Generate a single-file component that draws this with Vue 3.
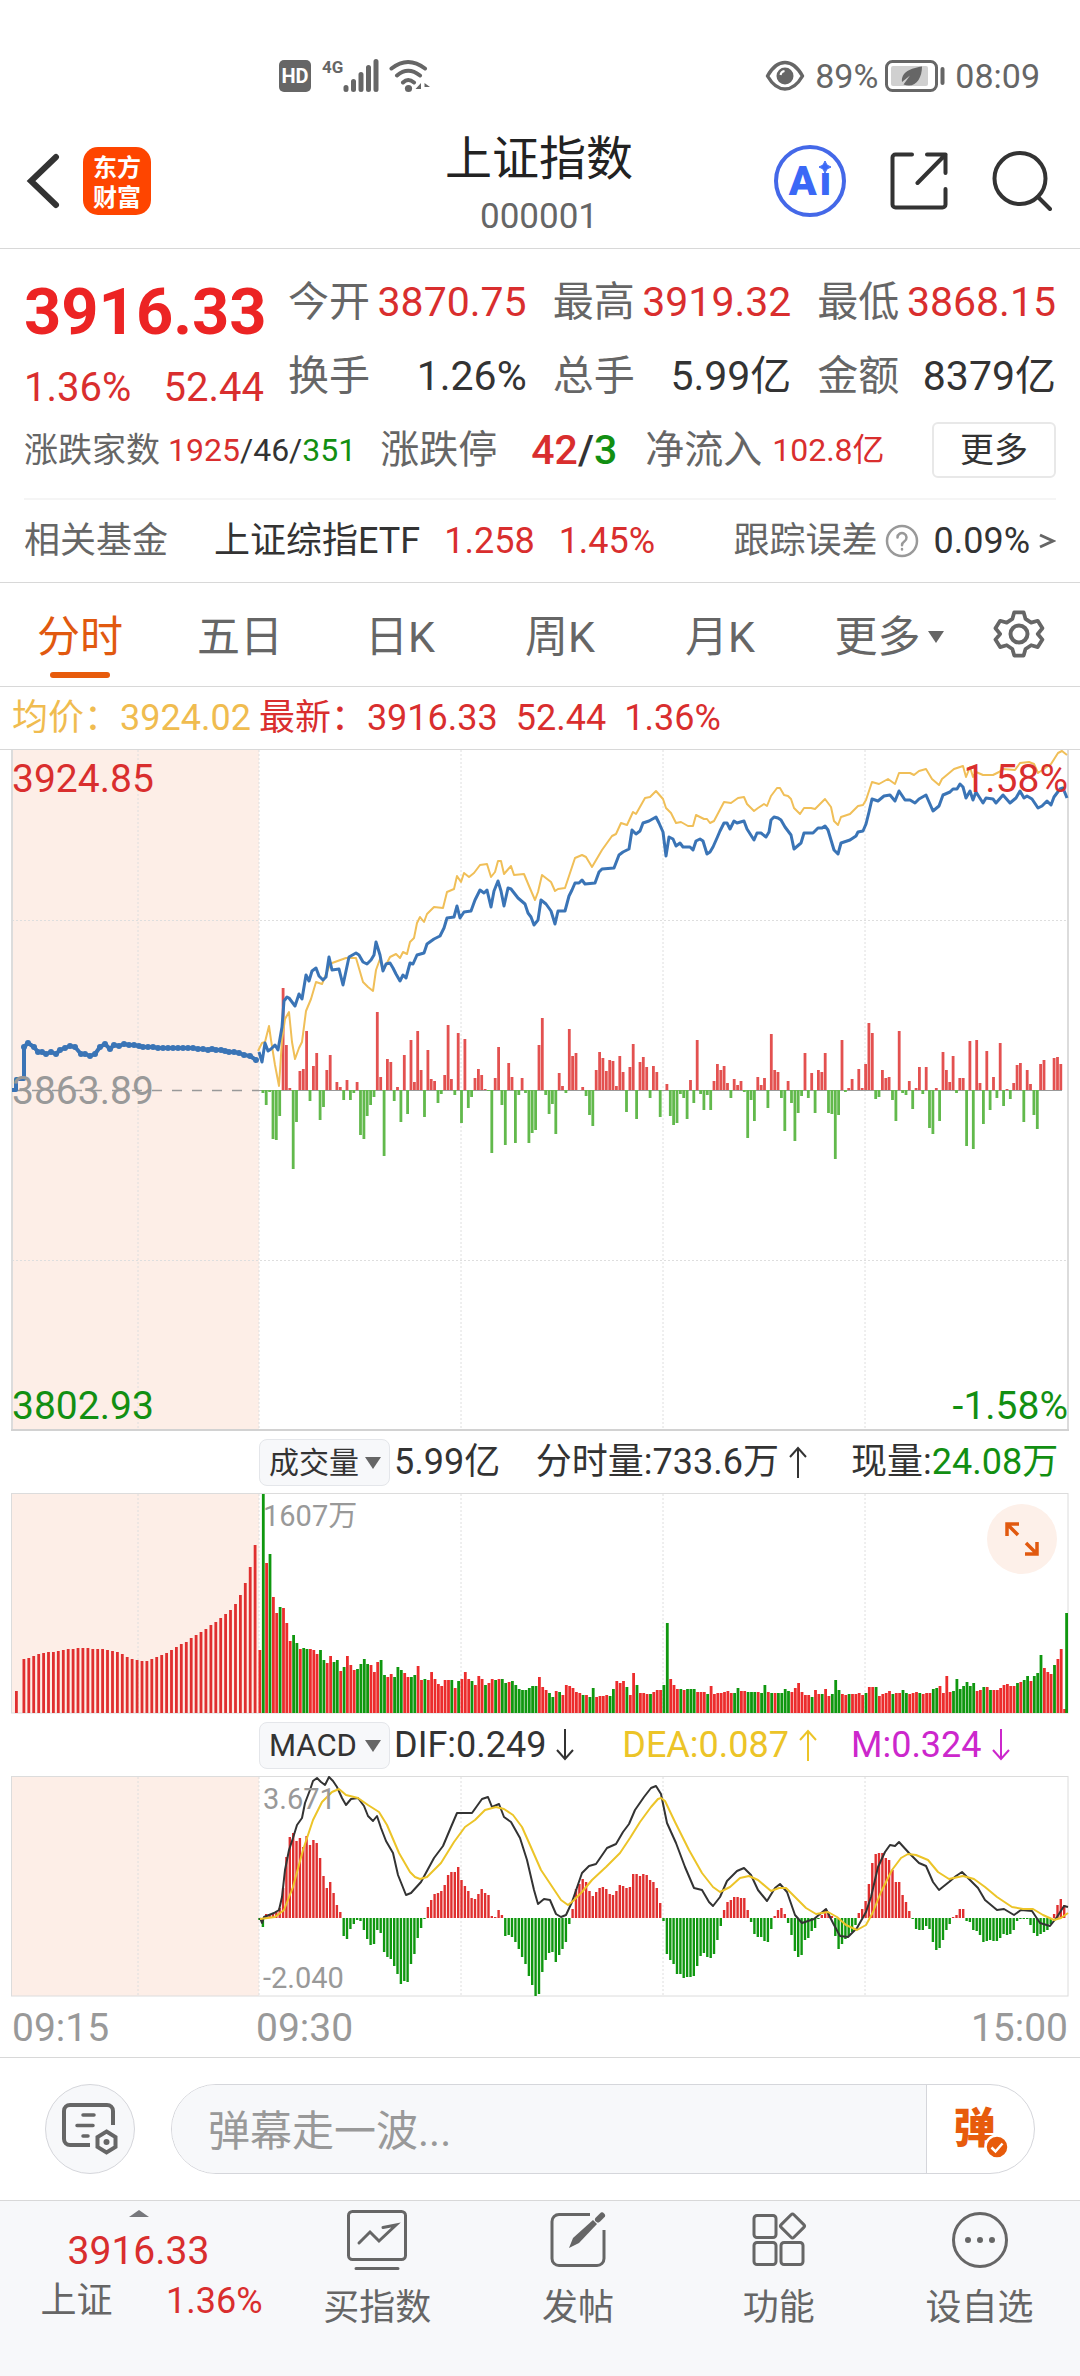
<template>
  <div class="page">

    <!-- Status bar -->
    <div class="status-bar">
      <div class="status-left">
        <span class="hd-badge">HD</span>
        <span class="net-type">4G</span>
        <svg class="signal" width="36" height="34" viewBox="0 0 36 34" fill="none" stroke="currentColor" stroke-width="5" stroke-linecap="round">
          <path d="M3 30.5v-2M10.500 30.500v-8M18 30.500v-15M25.500 30.500v-22M33 30.500v-28"/>
        </svg>
        <svg width="42" height="34" viewBox="0 0 42 34" fill="none" stroke="currentColor" stroke-width="4" stroke-linecap="round">
          <path d="M2.500 9.500Q19 -3.500 36 9.500M8 16.500Q19 7 31 16.500M14 23.500Q19 18.500 25 23.500"/>
          <circle cx="19.500" cy="29.500" r="3.600" fill="currentColor" stroke="none"/>
          <path d="M32 33V24L26.500 30H32M35.500 33V24L41 28H35.500" fill="currentColor" stroke="none"/>
        </svg>
      </div>
      <div class="status-right">
        <svg width="40" height="32" viewBox="0 0 40 32" fill="none" stroke="currentColor" stroke-width="3.500">
          <path d="M2.500 16Q10 2.500 20 2.500T37.500 16Q30 29 20 29T2.500 16z" stroke-linejoin="round"/>
          <circle cx="20" cy="16" r="8.500" fill="currentColor" stroke="none"/>
          <path d="M15.500 15q.5-3.500 4-4" stroke="#fff" stroke-width="2"/>
        </svg>
        <span class="battery-text">89%</span>
        <svg width="62" height="32" viewBox="0 0 62 32" fill="none">
          <rect x="1.500" y="1.500" width="50" height="29" rx="6" stroke="currentColor" stroke-width="3"/>
          <rect x="6" y="6" width="37" height="20" rx="2" fill="#d0d0d0"/>
          <path d="M37 6.500C26 8 16 12 17 22L25 15.500 18.500 24.500C30 29 37 19 37 6.500z" fill="currentColor"/>
          <path d="M57.500 9v14" stroke="currentColor" stroke-width="4" stroke-linecap="round"/>
        </svg>
        <span class="clock">08:09</span>
      </div>
    </div>

    <!-- Header -->
    <header class="header">
      <div class="header-side">
        <button class="icon-btn" aria-label="返回">
          <svg width="34" height="58" viewBox="0 0 34 58" fill="none" stroke="#333" stroke-width="6" stroke-linecap="round">
            <path d="M30 5L5 29l25 24"/>
          </svg>
        </button>
        <a class="brand" href="#"><span>东方</span><span>财富</span></a>
      </div>
      <div class="header-title">
        <h1>上证指数</h1>
        <p>000001</p>
      </div>
      <div class="header-side header-actions">
        <button class="icon-btn ai-btn" aria-label="智能助手">
          <span>A</span><span>ı</span>
          <svg class="ai-star" width="12" height="12" viewBox="0 0 12 12"><path d="M6 0Q7 5 12 6 7 7 6 12 5 7 0 6 5 5 6 0z" fill="#3b68f6" stroke="#3b68f6"/></svg>
        </button>
        <button class="icon-btn" aria-label="分享">
          <svg width="58" height="58" viewBox="0 0 58 58" fill="none" stroke="#333" stroke-width="4" stroke-linecap="round" stroke-linejoin="round">
            <path d="M22 2.500H5.500a3 3 0 0 0-3 3v47a3 3 0 0 0 3 3h47a3 3 0 0 0 3-3V37M37 2.500h18.500V21M55.500 2.500L27.500 31"/>
          </svg>
        </button>
        <button class="icon-btn" aria-label="搜索">
          <svg width="60" height="60" viewBox="0 0 60 60" fill="none" stroke="#333" stroke-width="4" stroke-linecap="round">
            <circle cx="28" cy="27.500" r="25.500"/>
            <path d="M46 46l12 12"/>
          </svg>
        </button>
      </div>
    </header>

    <!-- Quote summary -->
    <section class="quote">
      <div class="quote-main">
        <div class="last">
          <strong>3916.33</strong>
          <div class="last-change"><span>1.36%</span><span>52.44</span></div>
        </div>
        <dl class="quote-grid">
          <div v-for="item in quotes" :key="item.label" class="quote-cell">
            <dt>{{ item.label }}</dt>
            <dd :class="{ up: item.up }">{{ item.value }}</dd>
          </div>
        </dl>
      </div>
      <div class="breadth">
        <span class="breadth-label small">涨跌家数</span>
        <span class="breadth-count"><i class="up">1925</i>/46/<i class="down">351</i></span>
        <span class="breadth-label limit-label">涨跌停</span>
        <span class="limit-count"><i class="up">42</i>/<i class="down">3</i></span>
        <span class="breadth-label flow-label">净流入</span>
        <span class="flow up">102.8亿</span>
        <button class="more-btn">更多</button>
      </div>
      <div class="fund">
        <span class="muted">相关基金</span>
        <a class="fund-name" href="#">上证综指ETF</a>
        <span class="fund-price up">1.258</span>
        <span class="up">1.45%</span>
        <span class="track muted">跟踪误差</span>
        <svg class="help" width="34" height="34" viewBox="0 0 34 34" fill="none" stroke="#999" stroke-width="2.500" stroke-linecap="round">
          <circle cx="17" cy="17" r="15"/>
          <path d="M12.500 13.500a4.500 4.500 0 1 1 7 3.800c-1.800 1.200-2.500 2-2.500 4M17 25v.5"/>
        </svg>
        <span>0.09%</span>
        <svg class="chev" width="18" height="22" viewBox="0 0 18 22" fill="none" stroke="#666" stroke-width="3"><path d="M2 5l13 6-13 6"/></svg>
      </div>
    </section>

    <!-- Period tabs -->
    <nav class="tabs">
      <button
        v-for="tab in tabs"
        :key="tab"
        class="tab"
        :class="{ active: tab === activeTab, 'has-menu': tab === '更多' }"
        @click="activeTab = tab"
      >
        {{ tab }}<span v-if="tab === '更多'" class="tri"></span>
      </button>
      <button class="gear" aria-label="设置">
        <svg width="52" height="52" viewBox="0 0 52 52" fill="none" stroke="#666" stroke-width="4" stroke-linejoin="round">
          <path d="M21 3h10l2 7 6 4 7-2 5 8-5 6 5 6-5 8-7-2-6 4-2 7H21l-2-7-6-4-7 2-5-8 5-6-5-6 5-8 7 2 6-4z" transform="translate(1.500 .5) scale(.94)"/>
          <circle cx="26" cy="25" r="8.500"/>
        </svg>
      </button>
    </nav>

    <div class="price-line">
      <span class="avg">均价：3924.02</span>
      <span class="up">最新：3916.33</span>
      <span class="up gap-left">52.44</span>
      <span class="up gap-left">1.36%</span>
    </div>

    <!-- Intraday chart -->
    <div class="chart">
      <svg viewBox="11 750 1058 681">
        <rect x="12" y="750" width="247" height="680" fill="#fdeee7"/>
        <g stroke="#dedede" stroke-width="1" stroke-dasharray="2 2">
          <path v-for="x in gridX" :key="x" :d="`M${x} 750V1430`"/>
          <path d="M12 920.500H1068M12 1260.500H1068"/>
        </g>
        <path d="M12 750V1430M1068 750V1430" stroke="#dcdcdc" stroke-width="2"/>
        <path d="M11 1430H1069" stroke="#d2d2d2" stroke-width="2"/>
        <path d="M12 1090.500H259" stroke="#999" stroke-width="1.500" stroke-dasharray="10 10"/>
        <path d="M259 1090.500H1062" stroke="#999" stroke-width="1"/>
        <path :d="momentum.up" fill="#e35150"/>
        <path :d="momentum.down" fill="#62b94c"/>
        <polyline :points="avgLine" fill="none" stroke="#f0bf58" stroke-width="2" stroke-linejoin="round"/>
        <polyline :points="auctionLine" fill="none" stroke="#3a74b6" stroke-width="4" stroke-linejoin="round"/>
        <circle v-for="(dot, i) in auctionDots" :key="i" :cx="dot[0]" :cy="dot[1]" r="3" fill="#3a74b6"/>
        <polyline :points="priceLine" fill="none" stroke="#3a74b6" stroke-width="3" stroke-linejoin="round"/>
      </svg>
      <span class="axis top-left up">3924.85</span>
      <span class="axis top-right up">1.58%</span>
      <span class="axis mid-left">3863.89</span>
      <span class="axis bottom-left down">3802.93</span>
      <span class="axis bottom-right down">-1.58%</span>
    </div>

    <!-- Volume -->
    <div class="indicator">
      <label class="picker">
        <select aria-label="成交量指标"><option>成交量</option></select>
        <span class="tri"></span>
      </label>
      <div class="indicator-pair">
        <span>5.99亿</span>
        <span class="with-arrow">分时量:733.6万<svg width="20" height="34" viewBox="0 0 20 34" class="arrow"><path d="M10 33V3M2 12l8-9 8 9"/></svg></span>
      </div>
      <span class="indicator-last">现量:<i class="down">24.08万</i></span>
    </div>
    <div class="chart">
      <svg viewBox="11 1493 1058 221">
        <rect x="12" y="1494" width="247" height="219" fill="#fdeee7"/>
        <g stroke="#dedede" stroke-width="1" stroke-dasharray="2 2">
          <path v-for="x in gridX" :key="x" :d="`M${x} 1494V1713`"/>
        </g>
        <rect x="11.500" y="1493.500" width="1056.500" height="219.500" fill="none" stroke="#dcdcdc"/>
        <path :d="auctionVolume" fill="#e02f2f"/>
        <path :d="volume.up" fill="#ec2c2c"/>
        <path :d="volume.down" fill="#0f970f"/>
      </svg>
      <span class="axis-small vol-max">1607万</span>
      <button class="expand" aria-label="放大">
        <svg width="36" height="36" viewBox="0 0 36 36" fill="none" stroke="#e1590f" stroke-width="3.500">
          <path d="M3 15V3h12M3.500 3.500L14 14M33 21v12H21M32.500 32.500L22 22"/>
        </svg>
      </button>
    </div>

    <!-- MACD -->
    <div class="indicator">
      <label class="picker macd">
        <select aria-label="MACD指标"><option>MACD</option></select>
        <span class="tri"></span>
      </label>
      <div class="indicator-pair wide">
        <span class="with-arrow">DIF:0.249<svg width="20" height="34" viewBox="0 0 20 34" class="arrow"><path d="M10 1v30M2 22l8 9 8-9"/></svg></span>
        <span class="with-arrow dea">DEA:0.087<svg width="20" height="34" viewBox="0 0 20 34" class="arrow"><path d="M10 33V3M2 12l8-9 8 9"/></svg></span>
      </div>
      <span class="indicator-last with-arrow macd-m">M:0.324<svg width="20" height="34" viewBox="0 0 20 34" class="arrow"><path d="M10 1v30M2 22l8 9 8-9"/></svg></span>
    </div>
    <div class="chart">
      <svg viewBox="11 1776 1058 221">
        <rect x="12" y="1777" width="247" height="219" fill="#fdeee7"/>
        <g stroke="#dedede" stroke-width="1" stroke-dasharray="2 2">
          <path v-for="x in gridX" :key="x" :d="`M${x} 1777V1996`"/>
        </g>
        <rect x="11.500" y="1776.500" width="1056.500" height="219.500" fill="none" stroke="#dcdcdc"/>
        <path :d="macd.up" fill="#e02f2f"/>
        <path :d="macd.down" fill="#0f970f"/>
        <polyline :points="difLine" fill="none" stroke="#333" stroke-width="2" stroke-linejoin="round"/>
        <polyline :points="deaLine" fill="none" stroke="#ecc428" stroke-width="2" stroke-linejoin="round"/>
      </svg>
      <span class="axis-small macd-max">3.671</span>
      <span class="axis-small macd-min">-2.040</span>
    </div>

    <div class="times">
      <span class="time-first">09:15</span>
      <span>09:30</span>
      <span class="time-last">15:00</span>
    </div>

    <!-- Danmu input -->
    <div class="danmu">
      <button class="danmu-setting" aria-label="弹幕设置">
        <svg width="56" height="52" viewBox="0 0 56 52" fill="none" stroke="#666" stroke-width="4" stroke-linecap="round">
          <path d="M51 22V8a6 6 0 0 0-6-6H8a6 6 0 0 0-6 6v28a6 6 0 0 0 6 6h20" stroke-linecap="butt"/>
          <path d="M21 12h11M15 22.500h16M21 33h5" stroke-width="3.500"/>
          <path d="M44.500 28.500l9 5.500v10l-9 5.500-9-5.500V34z"/>
          <circle cx="44.500" cy="39" r="3" fill="#666" stroke="none"/>
        </svg>
      </button>
      <div class="danmu-box">
        <input type="text" placeholder="弹幕走一波..." aria-label="弹幕" />
        <button class="danmu-toggle" aria-label="弹幕开关">
          <span>弹</span>
          <svg class="danmu-check" width="26" height="26" viewBox="0 0 26 26">
            <circle cx="13" cy="13" r="11.500" fill="#e75b0c" stroke="#fff" stroke-width="2.500"/>
            <path d="M7.500 13.500l4 4 7-8" fill="none" stroke="#fff" stroke-width="2.500"/>
          </svg>
        </button>
      </div>
    </div>

    <!-- Bottom bar -->
    <footer class="bottom">
      <button class="bottom-index">
        <span class="caret"></span>
        <span class="bottom-price up">3916.33</span>
        <span class="bottom-row"><span>上证</span><span class="up">1.36%</span></span>
      </button>
      <button class="bottom-item">
        <svg width="62" height="62" viewBox="0 0 62 62" fill="none" stroke="#666" stroke-width="3" stroke-linecap="round">
          <rect x="2.500" y="2.500" width="57" height="48" rx="4"/>
          <path d="M13 34l11-11 9 9 17-16-13 2.500M10 59.500h42"/>
        </svg>
        买指数
      </button>
      <button class="bottom-item">
        <svg width="62" height="62" viewBox="0 0 62 62" fill="none" stroke="#666" stroke-width="3">
          <path d="M43 5.500H12a7 7 0 0 0-7 7v37a7 7 0 0 0 7 7h38a7 7 0 0 0 7-7V21"/>
          <path d="M22 39l4-10 20-18 4 4-18 19z" fill="#666" stroke="none"/>
          <path d="M51 10.500l4-4" stroke-width="6" stroke-linecap="round"/>
        </svg>
        发帖
      </button>
      <button class="bottom-item">
        <svg width="62" height="62" viewBox="0 0 62 62" fill="none" stroke="#666" stroke-width="3" stroke-linejoin="round">
          <rect x="6" y="6.500" width="22" height="22" rx="3"/>
          <rect x="6" y="33.500" width="22" height="22" rx="3"/>
          <rect x="33" y="33.500" width="22" height="22" rx="3"/>
          <rect x="35.500" y="8" width="18" height="18" rx="2" transform="rotate(45 44.500 17)"/>
        </svg>
        功能
      </button>
      <button class="bottom-item">
        <svg width="62" height="62" viewBox="0 0 62 62" fill="none" stroke="#666" stroke-width="3">
          <circle cx="31" cy="31" r="26.500"/>
          <g fill="#666" stroke="none"><circle cx="19" cy="31" r="3"/><circle cx="31" cy="31" r="3"/><circle cx="43" cy="31" r="3"/></g>
        </svg>
        设自选
      </button>
    </footer>
  </div>
</template>

<script setup>
import { ref } from 'vue'

const quotes = [
  { label: '今开', value: '3870.75', up: true },
  { label: '最高', value: '3919.32', up: true },
  { label: '最低', value: '3868.15', up: true },
  { label: '换手', value: '1.26%' },
  { label: '总手', value: '5.99亿' },
  { label: '金额', value: '8379亿' }
]

const tabs = ['分时', '五日', '日K', '周K', '月K', '更多']
const activeTab = ref('分时')

const gridX = [138, 259, 461, 663, 865]
const OPEN_X = 259.5
const STEP = 3.367

// one bar per minute, starting at 09:30
const momentumData = [
  0, -3, -15, -2, -49, -50, -26, 102, 45, 2, -79, -32, 19, 21, 59, -11, 24, 37, -30, -17,
  20, 35, 0, 8, 3, -10, 10, -10, -3, 8, -45, -49, -26, -15, -7, 78, 13, -66, 31, 28,
  -11, 3, -32, 35, -24, 50, 8, 59, 20, -27, 40, 11, 9, -13, -4, 15, 65, 11, -5, 57,
  -33, 51, -18, -7, 12, 21, 15, 1, -1, -63, 12, 43, -15, -55, 27, 13, -53, -5, 12, -3,
  -53, -43, -40, 45, 72, -5, -24, -14, -44, 17, 4, -3, 61, 34, 37, 0, 3, -6, -25, -36,
  20, 38, 32, 19, 30, 29, 4, 34, 18, -22, 23, 46, -29, 28, 33, 23, -8, 24, 18, -27,
  0, 6, -26, -35, -33, -4, -8, -29, 10, -13, 50, -4, -20, -5, -20, 9, 26, 20, 24, 7,
  -8, 11, 5, 9, -2, -48, -10, -31, 13, 5, 12, -18, 56, 20, 18, -8, -41, 9, -13, -51,
  -23, -6, 37, -8, 17, -23, 20, 18, 37, -23, -24, -69, -25, 50, -2, 2, 11, 0, 21, 2,
  26, 67, 57, -9, -7, 20, 12, 13, -10, -31, 59, -3, -5, 9, -19, 2, 23, -4, 23, -38,
  -44, 2, -31, 38, 20, 8, 34, -3, 12, 12, -56, 49, -59, 50, 7, -34, 39, -20, 13, -8,
  47, -16, 1, -9, 7, 25, 27, -32, 20, 6, -25, -39, 26, 30, 0, 0, 32, 33, 26
]

// negative marks a falling minute
const volumeData = [
  63, -219, 150, -159, 116, 100, -106, 105, 90, 72, -78, -70, 64, -65, -64, 64, 63, 59, -63, -53,
  50, 57, -51, -53, 42, -46, 57, 48, 43, -44, -49, -54, -49, 48, 41, 51, -53, -38, 36, 39,
  -36, -46, -43, 40, 36, -36, -38, 47, 33, -34, 33, 41, 34, 29, 27, 33, 33, -33, 25, -32,
  34, 41, 34, -32, 28, 37, 34, -28, 30, 34, -33, 34, -34, -30, 31, -32, -28, -24, -23, -23,
  -25, -27, -27, 36, 26, 23, -20, -16, 22, -21, 18, 28, 27, 25, 21, 20, -18, 18, -16, -25,
  16, 17, 17, 18, -17, -24, 32, 30, 32, -26, 18, 40, -28, 20, 20, 19, -19, 21, 23, 23,
  -28, -90, 34, 28, 24, -24, 23, -24, -24, -24, 21, 21, 21, -19, 27, 19, 20, 20, 21, 22,
  20, -20, -25, 22, 22, -21, -21, -21, 21, -20, -28, 21, -20, 20, -20, -20, -24, -22, 21, 25,
  30, 21, 18, 18, -16, 23, 19, -19, 24, 17, -19, -33, -23, 19, 18, -19, 19, 19, 20, 18,
  -20, 26, 26, -26, 17, 19, 20, 22, -19, 20, 20, -23, -20, 19, 20, 21, -20, 19, 20, 20,
  -24, -25, 27, 20, 37, 21, -22, -34, -24, -27, -31, -27, -30, 22, 23, -26, 26, -23, 23, 23,
  25, 28, 29, 27, 27, -30, 31, -33, -37, 32, -37, -40, -58, 45, 41, 39, -48, 54, 64, 4,
  -100
]

const auctionVolumeData = [
  54, 55, 57, 59, 60, 61, 61, 62, 63, 64, 64, 65, 65, 65, 64, 64, 64, 63, 62, 61,
  59, 56, 54, 53, 52, 52, 54, 56, 58, 60, 63, 66, 69, 71, 75, 78, 81, 84, 88, 91,
  95, 99, 103, 109, 118, 130, 146, 168
]

const macdData = [
  -2, -9, 4, 4, 5, 7, 10, 30, 61, 81, 85, 77, 80, 71, 82, 73, 78, 75, 60, 42,
  30, 36, 25, 13, 6, -18, -21, -11, -6, -2, -3, -12, -21, -27, -26, -12, -15, -34, -39, -41,
  -48, -56, -66, -63, -64, -46, -36, -20, -10, -1, 11, 18, 24, 25, 27, 33, 43, 46, 46, 51,
  38, 32, 27, 20, 19, 24, 29, 25, 23, 2, 1, 8, 3, -18, -17, -19, -24, -31, -39, -46,
  -58, -67, -78, -76, -54, -42, -35, -34, -44, -37, -31, -24, -6, 9, 29, 34, 39, 36, 27, 22,
  26, 30, 31, 29, 24, 23, 27, 33, 32, 30, 31, 44, 44, 42, 44, 43, 38, 36, 30, 15,
  -3, -36, -42, -46, -56, -56, -60, -59, -59, -58, -48, -38, -35, -39, -40, -36, -22, -8, 8, 16,
  18, 21, 21, 20, 20, 8, -4, -16, -19, -19, -23, -24, -11, 2, 8, 10, 4, -5, -17, -33,
  -39, -37, -22, -20, -13, -10, -1, 3, 9, 5, 2, -18, -31, -26, -21, -18, -14, -7, 5, 9,
  17, 34, 55, 64, 65, 65, 60, 58, 48, 36, 36, 23, 16, 7, -1, -11, -12, -12, -8, -11,
  -24, -32, -30, -22, -12, -6, 1, 3, 9, 9, -3, -4, -12, -13, -17, -24, -23, -22, -23, -23,
  -20, -16, -17, -16, -12, -3, -1, -1, -1, -7, -15, -18, -16, -14, -12, -6, 4, 13, 19, 13
]

const bar = (x, y, w, h) => `M${x.toFixed(1)} ${y}h${w}v${h}h-${w}z`

// bars on both sides of a zero line
function signedBars(data, zero, width) {
  const out = { up: '', down: '' }
  data.forEach((v, i) => {
    const x = OPEN_X + i * STEP - width / 2
    if (v > 0) out.up += bar(x, zero - v, width, v)
    if (v < 0) out.down += bar(x, zero, width, -v)
  })
  return out
}

// bars that all stand on the base line, the sign only picks the colour
function standingBars(data, base, width) {
  const out = { up: '', down: '' }
  data.forEach((v, i) => {
    const h = Math.abs(v)
    const x = Math.min(OPEN_X + i * STEP - 1, 1068 - width)
    out[v < 0 ? 'down' : 'up'] += bar(x, base - h, width, h)
  })
  return out
}

const momentum = signedBars(momentumData, 1090, 2.8)
const volume = standingBars(volumeData, 1713, 2.8)
const macd = signedBars(macdData, 1918, 2.4)
const auctionVolume = bar(15, 1691, 2.8, 22) +
  auctionVolumeData.map((h, i) => bar(22.5 + i * 4.92, 1713 - h, 2.8, h)).join('')

const auctionLine = '12,1090 16,1090 16,1079 24,1079 24,1047 28,1043 34,1047 38,1052 42,1052 46,1054 51,1052 56,1054 60,1050 65,1048 70,1046 75,1047 81,1054 85,1054 90,1056 95,1054 100,1047 105,1044 110,1049 114,1045 119,1046 124,1044 129,1045 134,1045 139,1046 143,1047 148,1047 153,1047 158,1048 163,1048 168,1048 173,1048 178,1048 183,1048 188,1048 193,1048 198,1049 203,1049 208,1050 212,1049 216,1050 221,1050 225,1051 229,1052 234,1052 239,1053 244,1055 250,1056 256,1060'
const auctionDots = auctionLine.split(' ').slice(4).map(p => p.split(','))

const priceLine = '259,1052 262,1062 265,1043 268,1051 271,1049 275,1045 278,1050 282,1027 284,1001 287,997 289,998 295,1006 299,994 302,999 306,975 309,981 312,971 316,968 319,976 323,980 326,977 329,957 332,970 339,969 343,985 349,957 356,953 359,955 363,962 367,964 371,960 374,955 376,942 380,955 383,971 386,964 390,963 393,968 396,974 400,981 403,975 406,978 410,963 413,964 417,955 424,953 427,944 434,939 440,936 444,928 447,918 454,917 457,906 460,918 464,912 471,911 475,900 480,890 484,893 487,890 491,907 494,891 498,881 501,891 504,906 508,888 511,889 518,898 525,904 528,913 531,917 534,925 538,920 541,900 546,904 551,911 555,924 558,911 565,911 569,896 572,890 575,883 579,883 582,880 585,884 595,883 599,872 602,869 614,868 619,855 623,852 629,849 632,830 636,834 640,831 643,823 649,821 656,817 659,823 663,832 666,856 669,837 673,839 676,846 680,843 683,847 690,847 693,850 696,841 700,839 703,841 707,854 710,852 713,847 717,838 720,831 724,823 727,823 730,829 734,821 737,823 744,821 747,829 754,840 757,833 761,833 766,837 769,832 771,820 774,817 778,818 781,820 785,827 791,835 794,849 801,843 804,833 813,833 818,828 822,828 825,826 828,830 834,850 838,854 841,843 850,840 856,836 858,832 863,831 866,824 869,812 872,799 878,801 884,796 890,795 895,801 899,791 905,800 910,800 915,803 919,799 926,795 933,811 939,806 943,795 950,792 953,789 957,789 960,784 963,787 966,798 970,791 973,800 976,792 983,803 986,798 993,799 996,803 1003,795 1010,803 1016,798 1020,791 1024,798 1027,796 1032,799 1038,808 1042,806 1047,801 1051,805 1054,797 1060,789 1063,788 1067,798'

const avgLine = '258,1051 262,1043 265,1042 269,1026 271,1040 275,1065 279,1086 282,1040 285,1019 289,1012 292,1042 295,1059 299,1048 302,1042 306,1011 311,999 316,982 322,984 329,967 332,963 346,958 356,958 363,982 368,987 373,991 376,970 380,959 383,971 390,957 396,954 400,958 403,952 407,954 410,942 414,938 417,923 420,917 424,922 427,914 434,907 443,908 447,892 454,889 457,876 461,882 464,873 469,877 474,873 480,865 487,864 491,877 495,872 498,861 501,861 504,874 511,866 514,875 524,874 529,886 535,900 538,892 542,875 551,882 555,891 558,889 565,888 569,876 575,858 582,855 586,857 592,867 602,850 612,836 616,834 621,823 627,825 633,812 636,814 645,798 650,797 656,791 663,799 666,808 671,813 676,823 681,822 688,826 693,826 696,815 704,819 707,819 710,823 714,821 724,802 731,803 738,798 744,797 747,804 754,811 758,808 764,804 767,806 771,796 777,788 780,788 784,795 788,796 791,799 794,808 800,814 804,808 811,808 815,809 825,799 831,807 834,821 838,825 841,817 850,814 858,806 863,805 866,800 872,782 879,784 888,779 895,784 899,773 910,773 914,775 919,771 926,769 932,779 939,785 942,779 954,769 963,766 966,777 970,767 973,777 976,772 983,775 993,775 999,772 1003,769 1015,770 1020,763 1029,762 1034,764 1038,773 1051,764 1058,753 1062,751 1067,755'

const difLine = '260,1918 262,1923 264,1917 274,1913 279,1910 282,1897 285,1870 289,1850 293,1838 297,1825 302,1818 305,1803 310,1790 313,1781 317,1778 321,1782 325,1785 329,1777 333,1781 337,1787 342,1798 346,1805 351,1799 358,1798 364,1806 368,1816 373,1821 377,1816 381,1828 386,1841 393,1853 398,1875 406,1895 411,1893 421,1882 434,1858 443,1846 451,1827 457,1813 472,1813 482,1799 488,1797 492,1807 499,1804 504,1817 511,1822 520,1838 527,1860 534,1890 538,1904 544,1899 550,1900 556,1914 561,1917 566,1915 572,1902 582,1873 589,1866 596,1864 607,1848 616,1844 623,1832 629,1824 635,1810 644,1797 651,1788 656,1786 661,1794 667,1823 676,1843 685,1867 694,1888 702,1890 709,1902 713,1906 720,1897 727,1881 737,1871 744,1868 751,1875 758,1890 767,1901 775,1888 780,1884 787,1892 795,1915 802,1923 814,1919 826,1909 833,1923 840,1936 848,1937 857,1928 866,1912 871,1897 878,1867 885,1852 890,1845 895,1846 899,1842 909,1853 919,1863 926,1866 933,1882 939,1890 949,1882 956,1876 962,1872 969,1879 978,1888 985,1900 997,1910 1004,1909 1014,1915 1021,1910 1032,1911 1040,1923 1050,1926 1057,1917 1064,1906 1068,1907'

const deaLine = '260,1919 275,1917 284,1910 293,1887 303,1850 313,1820 322,1802 332,1792 339,1789 346,1795 358,1798 368,1805 379,1812 387,1825 399,1853 410,1872 415,1877 420,1879 427,1877 441,1863 454,1842 465,1827 475,1820 485,1810 496,1807 504,1809 513,1815 522,1827 530,1845 541,1870 551,1885 561,1900 568,1905 573,1901 582,1892 592,1880 606,1867 620,1853 630,1838 640,1822 651,1807 658,1799 661,1798 665,1801 675,1822 689,1850 702,1873 713,1887 720,1892 730,1887 740,1878 749,1876 758,1880 771,1891 779,1888 786,1888 795,1897 806,1908 816,1914 828,1912 837,1917 846,1925 857,1930 866,1925 873,1912 881,1892 892,1870 901,1858 908,1854 916,1855 928,1860 938,1872 949,1879 963,1876 974,1879 985,1887 997,1897 1012,1907 1023,1909 1033,1909 1043,1915 1054,1920 1061,1918 1068,1913'
</script>

<style>
body {
  background: #fff;
}
</style>

<style scoped>
.page {
  font-family: Roboto, 'Noto Sans CJK SC', sans-serif;
  min-height: 100vh;
  display: flex;
  flex-direction: column;
  color: #333;
  background: #fff;
}
button, input, select {
  font: inherit;
  color: inherit;
  border: none;
  background: none;
  padding: 0;
  margin: 0;
}
button { cursor: pointer; }
a { color: inherit; text-decoration: none; }
i { font-style: normal; }
svg { display: block; flex: none; }
.up { color: #d92e2e; }
.down { color: #128f12; }
.muted { color: #666; }
.tri {
  border: 8px solid transparent;
  border-top: 12px solid #666;
  border-bottom: none;
}

/* Status bar */
.status-bar {
  display: flex;
  justify-content: space-between;
  align-items: center;
  height: 40px;
  padding: 56px 40px 0 279px;
  color: #666;
}
.status-left, .status-right {
  display: flex;
  align-items: center;
}
.hd-badge {
  width: 32px;
  line-height: 32px;
  border-radius: 5px;
  background: #666;
  color: #fff;
  font-size: 20px;
  font-weight: 700;
  text-align: center;
}
.net-type {
  font-size: 17px;
  font-weight: 700;
  line-height: 16px;
  align-self: flex-start;
  margin-left: 11px;
}
.signal { margin-right: 10px; }
.battery-text {
  font-size: 34px;
  line-height: 40px;
  margin: 0 7px 0 10px;
}
.clock {
  font-size: 34px;
  line-height: 40px;
  margin-left: 8px;
}

/* Header */
.header {
  display: flex;
  align-items: center;
  height: 128px;
  padding: 21px 28px 3px 26px;
  border-bottom: 1px solid #d8d8d8;
}
.header-side {
  flex: 1;
  display: flex;
  align-items: center;
  gap: 23px;
}
.header-actions {
  justify-content: flex-end;
  gap: 44px;
}
.brand {
  display: flex;
  flex-direction: column;
  align-items: center;
  justify-content: center;
  width: 68px;
  height: 68px;
  border-radius: 15px;
  background: #fe4500;
  color: #fff;
  font-family: 'Noto Sans CJK SC', sans-serif;
  font-size: 24px;
  font-weight: 700;
  line-height: 30px;
}
.header-title {
  padding-top: 12px;
  text-align: center;
}
.header-title h1 {
  margin: 0;
  font-size: 47px;
  font-weight: 400;
  line-height: 60px;
  color: #222;
}
.header-title p {
  margin: 0;
  font-size: 35px;
  line-height: 56px;
  color: #666;
}
.ai-btn {
  position: relative;
  display: flex;
  align-items: center;
  justify-content: center;
  gap: 3px;
  width: 72px;
  height: 72px;
  box-sizing: border-box;
  border: 4px solid #4468e8;
  border-radius: 50%;
  color: #3b68f6;
  font-size: 41px;
  font-weight: 900;
  line-height: 60px;
}
.ai-star {
  position: absolute;
  top: 12px;
  right: 11px;
}

/* Quote summary */
.quote {
  padding: 23px 24px 0;
  border-bottom: 1px solid #d8d8d8;
}
.quote-main {
  display: flex;
  gap: 24px;
}
.last {
  width: 240px;
  color: #d92e2e;
}
.last strong {
  display: block;
  font-size: 65px;
  font-weight: 700;
  line-height: 80px;
  color: #ec2424;
}
.last-change {
  display: flex;
  justify-content: space-between;
  margin-top: 2px;
  font-size: 40px;
  line-height: 68px;
}
.quote-grid {
  flex: 1;
  display: grid;
  grid-template-columns: repeat(3, 1fr);
  gap: 14px 26px;
  align-content: start;
  margin: 0;
}
.quote-cell {
  display: flex;
  justify-content: space-between;
  font-size: 41px;
  line-height: 60px;
}
.quote-cell dt { color: #666; }
.quote-cell dd { margin: 0; }
.breadth {
  display: flex;
  align-items: center;
  height: 56px;
  font-size: 32px;
  line-height: 56px;
}
.breadth-label {
  font-size: 39px;
  color: #666;
}
.breadth-label.small {
  font-size: 34px;
  margin-right: 8px;
}
.limit-label { margin-left: 24px; }
.limit-count {
  font-size: 41px;
  font-weight: 500;
  margin-left: 34px;
}
.flow-label { margin-left: 28px; }
.flow { margin-left: 10px; }
.more-btn {
  width: 124px;
  height: 56px;
  box-sizing: border-box;
  margin-left: auto;
  border: 2px solid #e8e8e8;
  border-radius: 6px;
  font-size: 34px;
  line-height: 48px;
}
.fund {
  display: flex;
  align-items: center;
  margin-top: 20px;
  border-top: 2px solid #f5f5f5;
  font-size: 36px;
  line-height: 82px;
}
.fund-name { margin-left: 46px; }
.fund-price { margin: 0 24px; }
.track { margin-left: auto; }
.help { margin: 0 14px 0 8px; }
.chev { margin-left: 8px; }

/* Tabs */
.tabs {
  display: flex;
  align-items: center;
  height: 103px;
  border-bottom: 1px solid #d8d8d8;
}
.tab {
  position: relative;
  flex: 1;
  display: flex;
  align-items: center;
  justify-content: center;
  gap: 7px;
  height: 103px;
  padding-top: 4px;
  font-size: 43px;
  line-height: 60px;
  color: #666;
}
.tab.has-menu {
  padding-left: 9px;
  padding-right: 9px;
}
.tab.active { color: #e1590f; }
.tab.active::after {
  content: '';
  position: absolute;
  left: 50%;
  bottom: 8px;
  width: 60px;
  height: 6px;
  margin-left: -30px;
  border-radius: 3px;
  background: #e75b0c;
}
.gear { margin: 0 35px 0 15px; }

.price-line {
  display: flex;
  padding: 0 12px;
  border-bottom: 1px solid #d8d8d8;
  font-size: 36px;
  line-height: 62px;
}
.avg {
  color: #f0bc50;
  margin-right: 8px;
}
.gap-left { margin-left: 18px; }

/* Charts */
.chart {
  position: relative;
  margin: 0 11px;
}
.chart svg {
  width: 100%;
  height: auto;
}
.axis {
  position: absolute;
  font-size: 39px;
  line-height: 46px;
}
.top-left { top: 6px; left: 1px; }
.top-right { top: 6px; right: 1px; }
.mid-left { top: 50%; left: 1px; margin-top: -23px; color: #999; }
.bottom-left { bottom: 2px; left: 1px; }
.bottom-right { bottom: 2px; right: 1px; }
.axis-small {
  position: absolute;
  left: 252px;
  font-size: 29px;
  line-height: 36px;
  color: #999;
}
.vol-max { top: 5px; }
.macd-max { top: 5px; }
.macd-min { bottom: 1px; }
.expand {
  position: absolute;
  top: 11px;
  right: 12px;
  display: flex;
  align-items: center;
  justify-content: center;
  width: 70px;
  height: 70px;
  border-radius: 50%;
  background: #fdf0e9;
}
.chart .expand svg {
  width: 36px;
  height: 36px;
}

/* Indicator rows */
.indicator {
  display: flex;
  align-items: center;
  height: 62px;
  padding: 0 11px 0 259px;
  font-size: 36px;
  line-height: 62px;
}
.picker {
  position: relative;
  width: 131px;
  height: 47px;
  box-sizing: border-box;
  border: 1px solid #e4e6ea;
  border-radius: 8px;
  background: #f7f8fa;
}
.picker select {
  display: block;
  appearance: none;
  width: 100%;
  height: 45px;
  padding-left: 9px;
  font-size: 30px;
  line-height: 45px;
}
.picker.macd select { font-size: 31px; }
.picker .tri {
  position: absolute;
  top: 17px;
  right: 8px;
  pointer-events: none;
}
.indicator-pair {
  flex: 1;
  display: flex;
  justify-content: space-between;
  margin: 0 43px 0 4px;
}
.indicator-pair.wide { margin-right: 33px; }
.indicator-last { width: 218px; }
.with-arrow {
  display: flex;
  align-items: center;
  gap: 9px;
}
.arrow {
  fill: none;
  stroke: currentColor;
  stroke-width: 2;
}
.dea { color: #ecc428; }
.macd-m { color: #cc27cc; }

.times {
  display: flex;
  padding: 2px 12px 0;
  border-bottom: 1px solid #d8d8d8;
  font-size: 39px;
  line-height: 58px;
  color: #999;
}
.time-first { width: 244px; }
.time-last { margin-left: auto; }

/* Danmu input */
.danmu {
  display: flex;
  align-items: center;
  gap: 36px;
  height: 143px;
  padding: 0 45px;
  box-sizing: border-box;
  border-bottom: 1px solid #d8d8d8;
}
.danmu-setting {
  display: flex;
  align-items: center;
  justify-content: center;
  width: 90px;
  height: 90px;
  box-sizing: border-box;
  border: 1px solid #d5d6db;
  border-radius: 50%;
  background: #f7f8fa;
}
.danmu-box {
  flex: 1;
  display: flex;
  height: 90px;
  box-sizing: border-box;
  border: 1px solid #d5d6db;
  border-radius: 45px;
  overflow: hidden;
}
.danmu-box input {
  flex: 1;
  min-width: 0;
  padding: 4px 0 0 36px;
  background: #f7f8fa;
  font-size: 42px;
}
.danmu-box input::placeholder { color: #999; }
.danmu-toggle {
  position: relative;
  width: 108px;
  padding-right: 12px;
  border-left: 1px solid #d5d6db;
  color: #e75b0c;
  font-size: 42px;
  font-weight: 900;
  line-height: 86px;
}
.danmu-check {
  position: absolute;
  right: 24px;
  bottom: 13px;
}

/* Bottom bar */
.bottom {
  flex: 1;
  display: grid;
  grid-template-columns: 277px repeat(4, 1fr);
  align-items: start;
  min-height: 174px;
  background: #f7f8fa;
  color: #666;
}
.bottom-index {
  display: flex;
  flex-direction: column;
  align-items: center;
  padding-top: 9px;
}
.caret {
  border: 10px solid transparent;
  border-top: none;
  border-bottom: 7px solid #77787c;
}
.bottom-price {
  font-size: 39px;
  line-height: 50px;
  margin-top: 9px;
}
.bottom-row {
  display: flex;
  justify-content: space-between;
  width: 222px;
  padding-left: 26px;
  font-size: 36px;
  line-height: 50px;
}
.bottom-item {
  display: flex;
  flex-direction: column;
  align-items: center;
  gap: 10px;
  padding-top: 8px;
  font-size: 36px;
  line-height: 54px;
}
</style>
